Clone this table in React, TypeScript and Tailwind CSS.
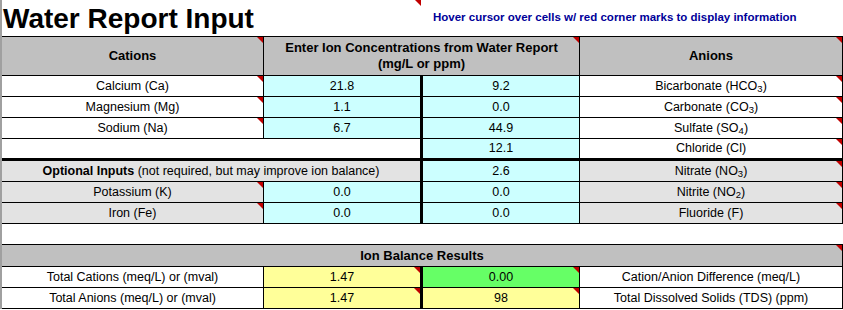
import React from "react";

const Mark = () => (
  <span className="absolute right-0 top-0 h-0 w-0 border-l-[6px] border-t-[6px] border-l-transparent border-t-[#c00000]" />
);

type CellProps = {
  className?: string;
  mark?: boolean;
  children?: React.ReactNode;
};

const Cell = ({ className = "", mark, children }: CellProps) => (
  <div className={`relative flex items-center justify-center border-b border-r border-black ${className}`}>
    {children}
    {mark && <Mark />}
  </div>
);

const Sub = ({ children }: { children: React.ReactNode }) => (
  <sub className="text-[9.5px]">{children}</sub>
);

const rowGrid = "grid grid-cols-[262px_159px_157px_263px]";

const App = () => {
  return (
    <div className="h-[310px] w-[843px] overflow-hidden bg-white font-['Liberation_Sans',Arial,sans-serif] text-[12.5px] text-black">
      <div className="border-l-2 border-[#a0a0a0]">
        {/* title */}
        <div className="flex h-[36px]">
          <div className="relative w-[419px]">
            <h1 className="pl-[1px] text-[28px] font-bold leading-[37px]">Water Report Input</h1>
            <Mark />
          </div>
          <p className="pl-[12px] text-[11.5px] font-bold leading-[34px] text-[#000099]">
            Hover cursor over cells w/ red corner marks to display information
          </p>
        </div>

        {/* header */}
        <div className="grid h-[40px] grid-cols-[262px_316px_263px] border-t border-black bg-[#c0c0c0] text-[13px] font-bold">
          <Cell mark>Cations</Cell>
          <Cell mark className="flex-col leading-[16px]">
            <span>Enter Ion Concentrations from Water Report</span>
            <span>(mg/L or ppm)</span>
          </Cell>
          <Cell mark>Anions</Cell>
        </div>

        {/* main cations / anions */}
        <div className={`${rowGrid} h-[21px]`}>
          <Cell mark>Calcium (Ca)</Cell>
          <Cell className="border-r-[3px] bg-[#ccffff]">21.8</Cell>
          <Cell className="bg-[#ccffff]">9.2</Cell>
          <Cell mark>
            <span>Bicarbonate (HCO<Sub>3</Sub>)</span>
          </Cell>
        </div>
        <div className={`${rowGrid} h-[21px]`}>
          <Cell mark>Magnesium (Mg)</Cell>
          <Cell className="border-r-[3px] bg-[#ccffff]">1.1</Cell>
          <Cell className="bg-[#ccffff]">0.0</Cell>
          <Cell mark>
            <span>Carbonate (CO<Sub>3</Sub>)</span>
          </Cell>
        </div>
        <div className={`${rowGrid} h-[21px]`}>
          <Cell mark>Sodium (Na)</Cell>
          <Cell className="border-r-[3px] bg-[#ccffff]">6.7</Cell>
          <Cell className="bg-[#ccffff]">44.9</Cell>
          <Cell mark>
            <span>Sulfate (SO<Sub>4</Sub>)</span>
          </Cell>
        </div>
        <div className="grid h-[22px] grid-cols-[421px_157px_263px]">
          <Cell className="border-b-[3px] border-r-[3px]" />
          <Cell className="border-b-[3px] bg-[#ccffff]">12.1</Cell>
          <Cell mark className="border-b-[3px]">Chloride (Cl)</Cell>
        </div>

        {/* optional inputs */}
        <div className="grid h-[21px] grid-cols-[421px_157px_263px]">
          <Cell className="border-r-[3px] bg-[#e3e3e3]">
            <span>
              <b>Optional Inputs</b> (not required, but may improve ion balance)
            </span>
          </Cell>
          <Cell className="bg-[#ccffff]">2.6</Cell>
          <Cell mark className="bg-[#e3e3e3]">
            <span>Nitrate (NO<Sub>3</Sub>)</span>
          </Cell>
        </div>
        <div className={`${rowGrid} h-[21px]`}>
          <Cell mark className="bg-[#e3e3e3]">Potassium (K)</Cell>
          <Cell className="border-r-[3px] bg-[#ccffff]">0.0</Cell>
          <Cell className="bg-[#ccffff]">0.0</Cell>
          <Cell mark className="bg-[#e3e3e3]">
            <span>Nitrite (NO<Sub>2</Sub>)</span>
          </Cell>
        </div>
        <div className={`${rowGrid} h-[21px]`}>
          <Cell mark className="bg-[#e3e3e3]">Iron (Fe)</Cell>
          <Cell className="border-r-[3px] bg-[#ccffff]">0.0</Cell>
          <Cell className="bg-[#ccffff]">0.0</Cell>
          <Cell mark className="bg-[#e3e3e3]">Fluoride (F)</Cell>
        </div>

        {/* spacer */}
        <div className="h-[21px] border-b border-black" />

        {/* ion balance results */}
        <div className="grid h-[22px] grid-cols-1 bg-[#c0c0c0] text-[13px] font-bold">
          <Cell mark>Ion Balance Results</Cell>
        </div>
        <div className={`${rowGrid} h-[21px]`}>
          <Cell>Total Cations (meq/L) or (mval)</Cell>
          <Cell mark className="border-r-[3px] bg-[#ffff99]">1.47</Cell>
          <Cell mark className="bg-[#66ff66]">0.00</Cell>
          <Cell>Cation/Anion Difference (meq/L)</Cell>
        </div>
        <div className={`${rowGrid} h-[21px]`}>
          <Cell>Total Anions (meq/L) or (mval)</Cell>
          <Cell mark className="border-r-[3px] bg-[#ffff99]">1.47</Cell>
          <Cell mark className="bg-[#ffff99]">98</Cell>
          <Cell>Total Dissolved Solids (TDS) (ppm)</Cell>
        </div>
      </div>
    </div>
  );
};

export default App;
